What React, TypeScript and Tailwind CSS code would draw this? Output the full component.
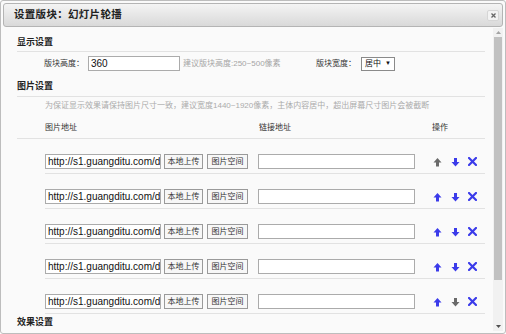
import React from 'react';

const font = { fontFamily: '"Liberation Sans", "Noto Sans CJK SC", sans-serif' };

const BLUE = '#3b3bea';
const GREY = '#6a6a6a';

const Up = ({ color }: { color: string }) => (
  <svg width="9" height="10" viewBox="0 0 9 10">
    <path d="M4.5 1 L8.5 5.5 H6 V9.5 H3 V5.5 H0.5 Z" fill={color} />
  </svg>
);

const Down = ({ color }: { color: string }) => (
  <svg width="9" height="10" viewBox="0 0 9 10">
    <path d="M4.5 9.5 L8.5 5 H6 V1 H3 V5 H0.5 Z" fill={color} />
  </svg>
);

const Cross = () => (
  <svg width="9" height="9" viewBox="0 0 9 9">
    <path d="M1 1 L8 8 M8 1 L1 8" stroke={BLUE} strokeWidth="2.2" strokeLinecap="square" />
  </svg>
);

const rows = [0, 1, 2, 3, 4];

const SectionTitle = ({ text, className }: { text: string; className?: string }) => (
  <div className={`text-[9px] leading-[12px] font-bold text-[#222] ${className ?? ''}`}>{text}</div>
);

const App = () => {
  return (
    <div className="w-[506px] h-[334px] bg-white" style={font}>
      <div className="w-[506px] h-[334px] border border-[#bdbdbd] rounded-[3px] bg-[#fafafa] flex flex-col overflow-hidden">
        {/* title bar */}
        <div className="mx-[2px] mt-[2px] h-[24px] shrink-0 border border-[#b4b4b4] rounded-[3px] bg-gradient-to-b from-[#f4f4f4] to-[#d9d9d9] flex items-center justify-between pl-[10px] pr-[3px]">
          <span className="text-[10.5px] font-bold text-[#222] tracking-[0.3px]">设置版块：幻灯片轮播</span>
          <div className="w-[12px] h-[11px] bg-[#f3f3f3] border border-[#d6d6d6] rounded-[2px] flex items-center justify-center">
            <svg width="5" height="5" viewBox="0 0 5 5">
              <path d="M0.5 0.5 L4.5 4.5 M4.5 0.5 L0.5 4.5" stroke="#666" strokeWidth="1.3" />
            </svg>
          </div>
        </div>

        {/* body */}
        <div className="flex flex-1 min-h-0">
          <div className="flex-1 pl-[16px] pr-[8px] overflow-hidden text-[8px] text-[#333]">
            {/* 显示设置 */}
            <div className="pt-[9px] pb-[3px] border-b border-[#e2e2e2]">
              <SectionTitle text="显示设置" />
            </div>
            <div className="mt-[4px] h-[15px] flex items-center pl-[27px]">
              <span className="w-[44px] leading-[15px]">版块高度：</span>
              <div className="w-[92px] h-[15px] bg-white border border-[#ababab] flex items-center pl-[2px] text-[10px] text-[#111]">
                360
              </div>
              <span className="ml-[3px] w-[133px] text-[#a5a5a5]">建议版块高度:250~500像素</span>
              <span className="w-[45px]">版块宽度：</span>
              <div className="w-[34px] h-[14px] bg-white border border-[#8a8a8a] flex items-center justify-between px-[3px] text-[#111]">
                <span>居中</span>
                <span className="text-[6px]">▼</span>
              </div>
            </div>

            {/* 图片设置 */}
            <div className="mt-[9px] pb-[4px] border-b border-[#e2e2e2]">
              <SectionTitle text="图片设置" />
            </div>
            <div className="mt-[3px] leading-[12px] pl-[28px] text-[#ababab] whitespace-nowrap">
              为保证显示效果请保持图片尺寸一致，建议宽度1440~1920像素，主体内容居中，超出屏幕尺寸图片会被截断
            </div>
            <div className="mt-[10px] pb-[4px] border-b border-[#e2e2e2] flex leading-[12px]">
              <span className="ml-[28px] w-[214px]">图片地址</span>
              <span className="w-[173px]">链接地址</span>
              <span>操作</span>
            </div>

            {rows.map(i => (
              <div key={i} className="ml-[28px] pt-[15px] pb-[4px] border-b border-[#e2e2e2]">
                <div className="h-[15px] flex items-center">
                  <div className="w-[116px] h-[15px] bg-white border border-[#ababab] overflow-hidden whitespace-nowrap pl-[2px] text-[10px] leading-[13px] text-[#111]">
                    http://s1.guangditu.com/data/
                  </div>
                  <button className="ml-[3px] w-[39px] h-[15px] bg-[#f7f7f7] border border-[#9a9a9a] text-[8px] text-[#333] leading-[13px]">
                    本地上传
                  </button>
                  <button className="ml-[4px] w-[41px] h-[15px] bg-[#f7f7f7] border border-[#9a9a9a] text-[8px] text-[#333] leading-[13px]">
                    图片空间
                  </button>
                  <div className="ml-[10px] w-[157px] h-[15px] bg-white border border-[#ababab]" />
                  <div className="ml-[18px] flex items-center">
                    <Up color={i === 0 ? GREY : BLUE} />
                    <div className="ml-[9px]">
                      <Down color={i === rows.length - 1 ? GREY : BLUE} />
                    </div>
                    <div className="ml-[8px]">
                      <Cross />
                    </div>
                  </div>
                </div>
              </div>
            ))}

            <SectionTitle text="效果设置" className="mt-[2px]" />
          </div>

          {/* scrollbar */}
          <div className="w-[10px] mr-[2px] mt-[1px] mb-[2px] bg-[#f1f1f1] flex flex-col items-center">
            <div className="h-[9px] flex items-center justify-center">
              <svg width="5" height="3" viewBox="0 0 5 3">
                <path d="M0 3 L2.5 0 L5 3 Z" fill="#a3a3a3" />
              </svg>
            </div>
            <div className="w-[8px] h-[243px] bg-[#c1c1c1]" />
            <div className="flex-1" />
            <div className="h-[9px] flex items-center justify-center">
              <svg width="5" height="3" viewBox="0 0 5 3">
                <path d="M0 0 L2.5 3 L5 0 Z" fill="#505050" />
              </svg>
            </div>
          </div>
        </div>
      </div>
    </div>
  );
};

export default App;
